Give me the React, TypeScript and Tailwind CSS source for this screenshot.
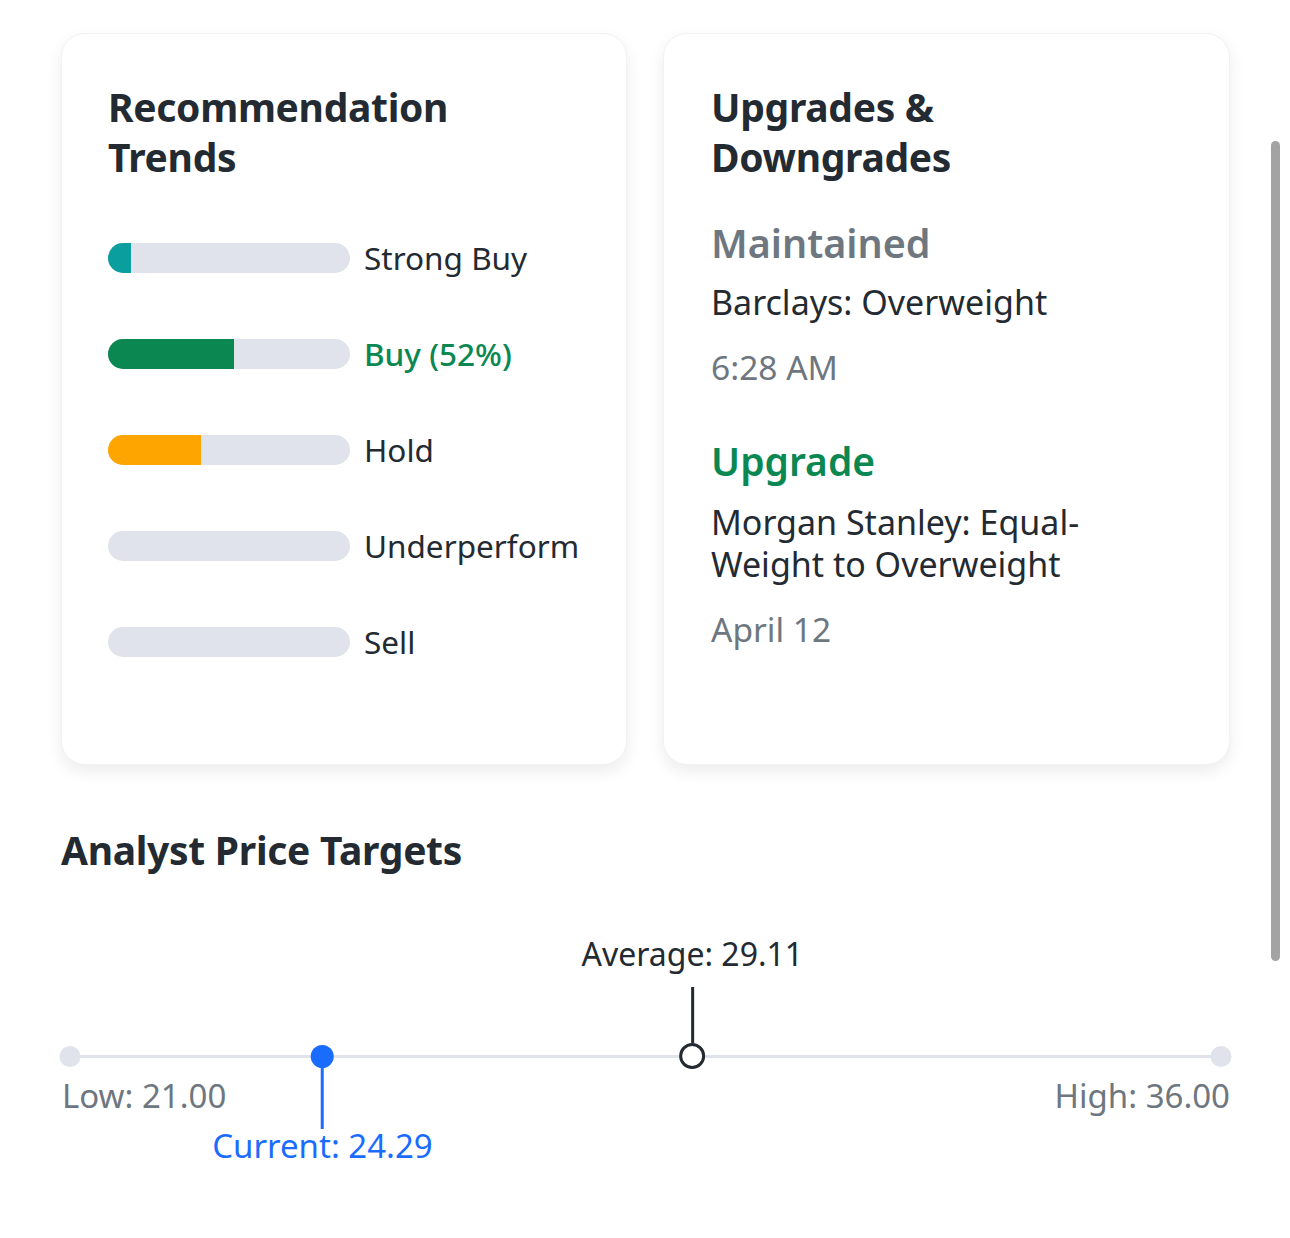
const trends = [
  { label: "Strong Buy", pct: 9.5, color: "bg-[#0a9e9e]", active: false },
  { label: "Buy (52%)", pct: 52, color: "bg-[#0b8751]", active: true },
  { label: "Hold", pct: 38.5, color: "bg-[#ffa500]", active: false },
  { label: "Underperform", pct: 0, color: "bg-[#0a9e9e]", active: false },
  { label: "Sell", pct: 0, color: "bg-[#0a9e9e]", active: false },
];

const low = 21;
const high = 36;
const pos = (v: number) => ((v - low) / (high - low)) * 100;

function TrendRow({ label, pct, color, active }: (typeof trends)[number]) {
  return (
    <div className="flex items-center gap-[14px] h-[40px]">
      <div className="w-[242px] h-[30px] rounded-full bg-[#e0e3eb] overflow-hidden">
        {pct > 0 && <div className={`h-full ${color}`} style={{ width: `${pct}%` }} />}
      </div>
      <span className={`text-[31.5px] leading-[40px] ${active ? "text-[#0b8751] font-medium" : "text-[#232a31]"}`}>
        {label}
      </span>
    </div>
  );
}

export default function App() {
  return (
    <div className="relative w-[1290px] h-[1238px] bg-white text-[#232a31] font-['Noto_Sans',sans-serif]">
      {/* CARDS */}
      <div className="grid grid-cols-[566px_567px] gap-[36px] pl-[61px] pt-[33px]">
        {/* Recommendation Trends */}
        <div className="h-[732px] rounded-[24px] bg-white shadow-[0_6px_16px_rgba(0,0,0,0.08)] border border-[#f2f2f2] px-[46px] pt-[48px]">
          <h2 className="text-[39px] leading-[50px] font-bold tracking-[-0.3px]">
            Recommendation
            <br />
            Trends
          </h2>
          <div className="mt-[56px] flex flex-col gap-[56px]">
            {trends.map((t) => (
              <TrendRow key={t.label} {...t} />
            ))}
          </div>
        </div>

        {/* Upgrades & Downgrades */}
        <div className="h-[732px] rounded-[24px] bg-white shadow-[0_6px_16px_rgba(0,0,0,0.08)] border border-[#f2f2f2] px-[47px] pt-[48px]">
          <h2 className="text-[39px] leading-[50px] font-bold tracking-[-0.3px]">
            Upgrades &amp;
            <br />
            Downgrades
          </h2>
          <div className="mt-[35px]">
            <div className="text-[39.5px] leading-[52px] font-semibold text-[#6e7780]">Maintained</div>
            <div className="text-[34px] leading-[42px] mt-[12px]">Barclays: Overweight</div>
            <div className="text-[33.5px] leading-[42px] mt-[23px] text-[#6e7780]">6:28 AM</div>
          </div>
          <div className="mt-[47px]">
            <div className="text-[39px] leading-[52px] font-semibold text-[#0b8751]">Upgrade</div>
            <div className="text-[34px] leading-[42px] mt-[14px]">
              Morgan Stanley: Equal-
              <br />
              Weight to Overweight
            </div>
            <div className="text-[33.5px] leading-[42px] mt-[23px] text-[#6e7780]">April 12</div>
          </div>
        </div>
      </div>

      {/* ANALYST PRICE TARGETS */}
      <div className="pl-[61px] pr-[60px] pt-[60px]">
        <h2 className="text-[39px] leading-[50px] font-bold tracking-[-0.3px]">Analyst Price Targets</h2>

        <div className="relative mt-[54px] mx-[9px] h-[140px]">
          {/* track */}
          <div className="absolute top-[126px] left-0 right-0 h-[3px] bg-[#e0e3eb]" />
          <div className="absolute top-[117px] left-0 w-[21px] h-[21px] -translate-x-1/2 rounded-full bg-[#e0e3eb]" />
          <div className="absolute top-[117px] left-full w-[21px] h-[21px] -translate-x-1/2 rounded-full bg-[#e0e3eb]" />

          {/* average marker */}
          <div
            className="absolute top-[5px] -translate-x-1/2 flex flex-col items-center"
            style={{ left: `${pos(29.11)}%` }}
          >
            <span className="text-[32px] leading-[40px] whitespace-nowrap">Average: 29.11</span>
            <div className="mt-[13px] w-[3px] h-[56px] bg-[#232a31]" />
            <div className="w-[26px] h-[26px] rounded-full bg-white border-[3px] border-[#232a31]" />
          </div>

          {/* current marker */}
          <div
            className="absolute top-[116px] -translate-x-1/2 flex flex-col items-center"
            style={{ left: `${pos(24.29)}%` }}
          >
            <div className="w-[23px] h-[23px] rounded-full bg-[#1a6cff]" />
            <div className="w-[3px] h-[61px] bg-[#1a6cff]" />
            <span className="-mt-[3px] text-[33px] leading-[40px] whitespace-nowrap text-[#1a6cff]">
              Current: 24.29
            </span>
          </div>
        </div>

        {/* low / high */}
        <div className="mt-[7px] flex justify-between pl-[1px] text-[33px] leading-[40px] text-[#6e7780]">
          <span>Low: 21.00</span>
          <span>High: 36.00</span>
        </div>
      </div>

      {/* overlay scrollbar */}
      <div className="absolute top-[141px] left-[1271px] w-[9px] h-[820px] rounded-full bg-[#a3a3a3]" />
    </div>
  );
}
